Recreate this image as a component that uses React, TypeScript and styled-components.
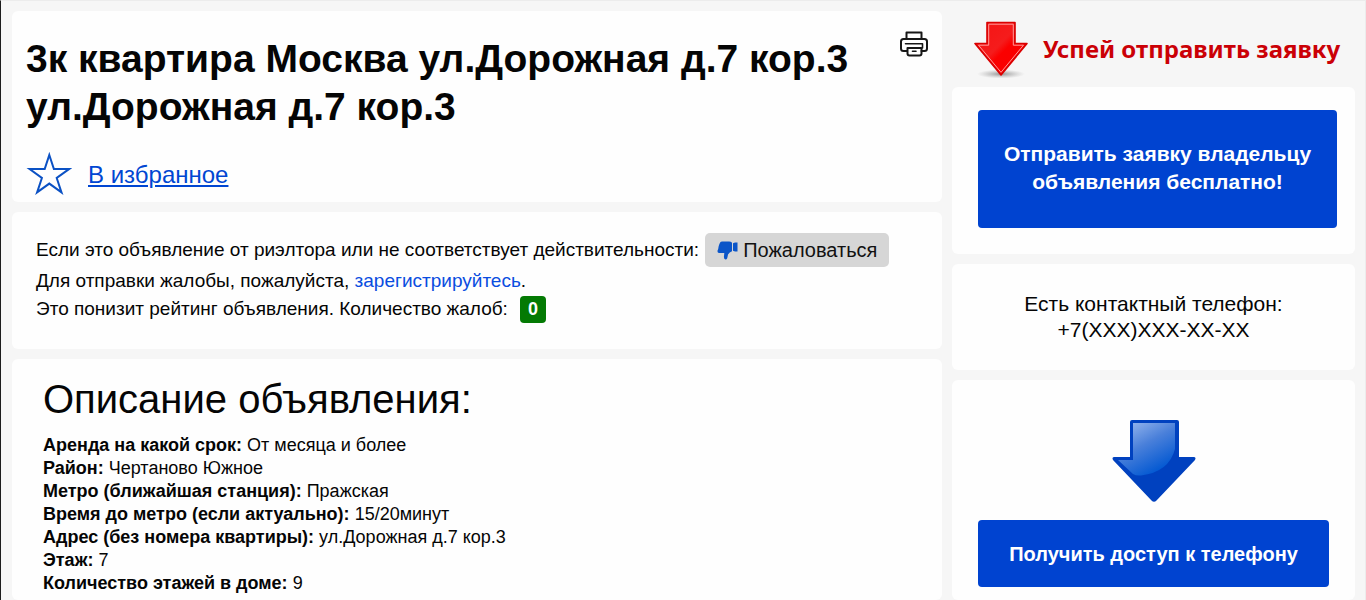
import React from "react";
import styled, { createGlobalStyle } from "styled-components";

const GlobalStyle = createGlobalStyle`
  *, *::before, *::after { box-sizing: border-box; }
  body {
    margin: 0;
    background: #f6f6f6;
    color: #050505;
    font-family: "Liberation Sans", Arial, sans-serif;
  }
`;

const Page = styled.div`
  display: grid;
  grid-template-columns: minmax(0, 930fr) minmax(0, 403fr);
  gap: 10px;
  align-items: stretch;
  min-height: 100vh;
  padding: 0 10px 0 11px;
  border-top: 1px solid #ececec;
  border-left: 1px solid #1c1c1c;
  border-right: 1px solid #ececec;
  overflow: hidden;
`;

const Main = styled.main`
  display: flex;
  flex-direction: column;
  gap: 10px;
  padding-top: 10px;
`;

const Side = styled.aside`
  display: flex;
  flex-direction: column;
  gap: 10px;
`;

const Card = styled.section<{ $padding: string; $grow?: boolean }>`
  padding: ${(p) => p.$padding};
  flex: ${(p) => (p.$grow ? "1 0 auto" : "0 0 auto")};
  border-radius: 6px;
  background: #fefefe;
`;

const TitleRow = styled.div`
  display: flex;
  justify-content: space-between;
  align-items: flex-start;
`;

const Title = styled.h1`
  margin: 0;
  max-width: 850px;
  font-size: 39px;
  line-height: 48px;
  font-weight: 700;
`;

const IconButton = styled.button`
  display: flex;
  margin: -4px 0 0;
  padding: 0;
  border: 0;
  background: none;
  color: #161616;
  cursor: pointer;
`;

const Favourite = styled.a`
  display: flex;
  align-items: flex-start;
  gap: 16px;
  width: fit-content;
  margin-top: 20px;
  color: #0046d2;
  font-size: 24px;
  line-height: 48px;
`;

const Line = styled.p`
  display: flex;
  flex-wrap: wrap;
  align-items: center;
  column-gap: 6px;
  margin: 0;
  font-size: 19px;
  line-height: 28px;
`;

const TextLink = styled.a`
  color: #0a4de0;
  text-decoration: none;
`;

const ComplainButton = styled.button`
  display: inline-flex;
  align-items: center;
  gap: 5px;
  height: 34px;
  padding: 0 12px;
  border: 0;
  border-radius: 5px;
  background: #d6d6d6;
  color: #111;
  font: 20px "Liberation Sans", Arial, sans-serif;
  cursor: pointer;
`;

const Count = styled.span`
  width: 26px;
  height: 27px;
  margin-left: 6px;
  border-radius: 4px;
  background: #047a04;
  color: #fff;
  font-size: 18px;
  font-weight: 700;
  line-height: 27px;
  text-align: center;
`;

const SectionTitle = styled.h2`
  margin: 0 0 11px;
  font-size: 40px;
  line-height: 48px;
  font-weight: 400;
`;

const Details = styled.dl`
  margin: 0;
  font-size: 18px;
  line-height: 23px;
`;

const Detail = styled.div`
  dt, dd { display: inline; margin: 0; }
  dt { font-weight: 700; }
`;

const Urgent = styled.div`
  display: flex;
  align-items: center;
  height: 76px;
  gap: 14px;
  padding: 20px 0 0 21px;
  white-space: nowrap;
`;

const UrgentText = styled.strong`
  color: #cb0006;
  font-family: "Noto Sans", sans-serif;
  font-size: 24px;
  line-height: 32px;
`;

const ActionButton = styled.button<{ $size: "large" | "small" }>`
  display: block;
  width: 100%;
  height: ${(p) => (p.$size === "large" ? 118 : 67)}px;
  padding: 0 20px ${(p) => (p.$size === "large" ? 3 : 0)}px;
  border: 0;
  border-radius: 4px;
  background: #0043d0;
  color: #fff;
  font-family: "Liberation Sans", Arial, sans-serif;
  font-size: ${(p) => (p.$size === "large" ? 21 : 20)}px;
  font-weight: 700;
  line-height: 28px;
  cursor: pointer;
`;

const Phone = styled.p`
  margin: 0;
  font-size: 21px;
  line-height: 26px;
  text-align: center;
`;

const ArrowHolder = styled.div`
  display: flex;
  justify-content: center;
  margin-bottom: 18px;
`;

const details = [
  ["Аренда на какой срок:", "От месяца и более"],
  ["Район:", "Чертаново Южное"],
  ["Метро (ближайшая станция):", "Пражская"],
  ["Время до метро (если актуально):", "15/20минут"],
  ["Адрес (без номера квартиры):", "ул.Дорожная д.7 кор.3"],
  ["Этаж:", "7"],
  ["Количество этажей в доме:", "9"],
];

const PrinterIcon = () => (
  <svg width="28" height="26" viewBox="0 0 28 26" fill="none" stroke="currentColor" strokeWidth="2" strokeLinejoin="round" strokeLinecap="round" aria-hidden="true">
    <path d="M6.5 8V1.5h15V8" />
    <path d="M7 20H3.500Q1 20 1 17.500V10.500Q1 8 3.500 8h21Q27 8 27 10.500v7Q27 20 24.500 20H21.500" />
    <path d="M5.500 12.700H22.500V17" strokeWidth="1.600" />
    <path d="M7.500 17v5.500q0 2 2 2h10q2 0 2-2V17z" />
    <path d="M12.500 20.300h3.500" strokeWidth="1.600" />
  </svg>
);

const StarIcon = () => (
  <svg width="46" height="44" viewBox="0 0 46 44" fill="none" stroke="#0b51c4" strokeWidth="2" aria-hidden="true">
    <path d="M23.300 4 27.900 18.100H43L30.700 27l4.800 14.400-12.200-8.800-12.200 8.800L15.900 27 3.600 18.100h15.100z" />
  </svg>
);

const ThumbDownIcon = () => (
  <svg width="21" height="19" viewBox="0 0 21 19" fill="#0b55c8" aria-hidden="true">
    <path d="M3.500 1Q4 .500 5 .500h7q2 0 3 1.200v8.600q-2.500.700-4 3.200-.400 2.500-.900 4Q9.700 18.500 8.400 18.500 6.600 18 7 15l.3-3H2Q.3 11.700.5 9.800L1.200 8l.4-2.400L2.400 3z" />
    <path d="M16 2.200 18 1.500h2.500v9H18l-2-.700z" />
  </svg>
);

const RedArrow = () => (
  <svg width="56" height="60" viewBox="0 -2 56 60" aria-hidden="true">
    <defs>
      <linearGradient id="redFill" x1="0" y1="0" x2="1" y2="1">
        <stop offset="0" stopColor="#f51212" />
        <stop offset=".45" stopColor="#f51c1c" />
        <stop offset=".55" stopColor="#fb0000" />
        <stop offset="1" stopColor="#f80000" />
      </linearGradient>
      <radialGradient id="redShadow">
        <stop offset="0" stopColor="#555" stopOpacity=".6" />
        <stop offset="1" stopColor="#888" stopOpacity="0" />
      </radialGradient>
    </defs>
    <ellipse cx="28" cy="53" rx="24" ry="4.500" fill="url(#redShadow)" />
    <path d="M14 1.500h28v21h12L28 54 2 22.500h12z" fill="url(#redFill)" stroke="#d90000" strokeWidth="1.600" strokeLinejoin="round" />
    <path d="M15.700 3.200h24.600v21H50.500L28 51.300 5.500 24.200h10.200z" fill="none" stroke="#ff9a9a" strokeWidth="1" />
  </svg>
);

const BlueArrow = () => (
  <svg width="84" height="83" viewBox="0 0 84 83" aria-hidden="true">
    <defs>
      <linearGradient id="blueShine" x1="0" y1="0" x2=".6" y2="1">
        <stop offset="0" stopColor="#a3bff0" />
        <stop offset=".5" stopColor="#4a80da" />
        <stop offset="1" stopColor="#0057d2" />
      </linearGradient>
    </defs>
    <path d="M20 1h45q2 0 2 2v35H81.500q3 0 1.500 3L44.500 81.500q-2.500 2.500-5 0L1 41Q-.5 38 2.500 38H18V3q0-2 2-2z" fill="#0041bf" />
    <path d="M21 4h42v26Q57 53 29 56.500 24 57 21 55L6 41H21z" fill="url(#blueShine)" />
  </svg>
);

export default function App() {
  return (
    <>
      <GlobalStyle />
      <Page>
        <Main>
          <Card $padding="24px 14px 3px">
            <TitleRow>
              <Title>3к квартира Москва ул.Дорожная д.7 кор.3 ул.Дорожная д.7 кор.3</Title>
              <IconButton type="button" aria-label="Печать"><PrinterIcon /></IconButton>
            </TitleRow>
            <Favourite href="#favourite"><StarIcon />В избранное</Favourite>
          </Card>
          <Card $padding="21px 24px 26px">
            <Line>
              <span>Если это объявление от риэлтора или не соответствует действительности:</span>
              <ComplainButton type="button"><ThumbDownIcon />Пожаловаться</ComplainButton>
            </Line>
            <Line>
              <span>Для отправки жалобы, пожалуйста, <TextLink href="#register">зарегистрируйтесь</TextLink>.</span>
            </Line>
            <Line>
              <span>Это понизит рейтинг объявления. Количество жалоб:</span>
              <Count>0</Count>
            </Line>
          </Card>
          <Card $padding="16px 31px 0" $grow>
            <SectionTitle>Описание объявления:</SectionTitle>
            <Details>
              {details.map(([label, value]) => (
                <Detail key={label}><dt>{label}</dt> <dd>{value}</dd></Detail>
              ))}
            </Details>
          </Card>
        </Main>
        <Side>
          <Urgent><RedArrow /><UrgentText>Успей отправить заявку</UrgentText></Urgent>
          <Card $padding="23px 18px 26px 26px">
            <ActionButton type="button" $size="large">Отправить заявку владельцу объявления бесплатно!</ActionButton>
          </Card>
          <Card $padding="27px 24px">
            <Phone>Есть контактный телефон:<br />+7(XXX)XXX-XX-XX</Phone>
          </Card>
          <Card $padding="39px 26px 13px" $grow>
            <ArrowHolder><BlueArrow /></ArrowHolder>
            <ActionButton type="button" $size="small">Получить доступ к телефону</ActionButton>
          </Card>
        </Side>
      </Page>
    </>
  );
}
